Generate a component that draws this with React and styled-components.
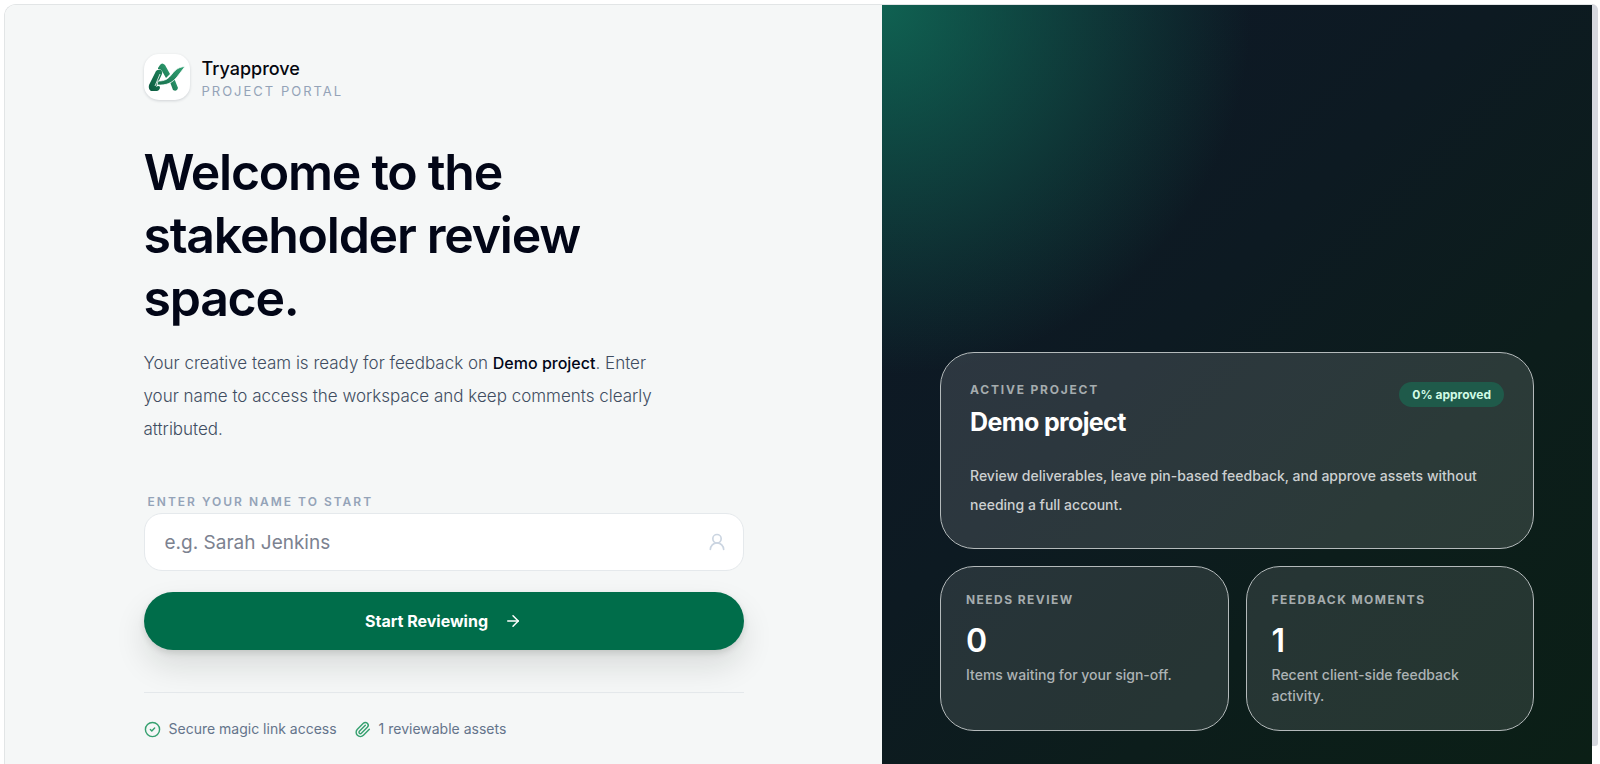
import React, { useState } from 'react';
import styled, { createGlobalStyle } from 'styled-components';
import { ArrowRight, CircleCheck, Paperclip, UserRound } from 'lucide-react';

const GlobalStyle = createGlobalStyle`
  * {
    box-sizing: border-box;
  }

  body {
    margin: 0;
    background: #fff;
    font-family: Inter, "Liberation Sans", sans-serif;
  }

  h1, h2, p {
    margin: 0;
  }
`;

const stats = [
    { label: 'Needs review', value: 0, text: 'Items waiting for your sign-off.' },
    { label: 'Feedback moments', value: 1, text: 'Recent client-side feedback activity.' }
];

const Logo = () => (
    <svg width="38" height="29" viewBox="0 0 38 29" aria-hidden="true">
        <defs>
            <linearGradient id="logoDark" x1="0" y1="1" x2="1" y2="0">
                <stop offset="0" stopColor="#0c5a40" />
                <stop offset="1" stopColor="#1d8259" />
            </linearGradient>
            <linearGradient id="logoLight" x1="0" y1="1" x2="1" y2="0">
                <stop offset="0" stopColor="#17714d" />
                <stop offset="1" stopColor="#33a375" />
            </linearGradient>
        </defs>
        <path d="M10 5L12 2Q14 -1 17 2L22 11L18 15L14 8Q13 6 10 6Z" fill="url(#logoLight)" />
        <path d="M22 19L26 15L30 25Q29 29 25 27Z" fill="url(#logoLight)" />
        <path d="M8 8Q10 6 13 7Q15 9 14 11L8 24Q11 22 12 24Q12 27 9 28L3 28Q0 26 1 22Z" fill="url(#logoDark)" />
        <path d="M10 18C17 18 20 16 24 11C28 6 31 4 37 3.5L29 14C24 20 19 22.5 9 22Z" fill="url(#logoLight)" stroke="#fff" strokeWidth="0.8" />
        <path d="M12 11L7 23" fill="none" stroke="#fff" strokeWidth="0.8" />
    </svg>
);

const App = () => {
    const [name, setName] = useState('');

    const handleSubmit = (e) => {
        e.preventDefault();
    };

    return (
        <Page>
            <GlobalStyle />
            <Frame>
                <Welcome>
                    <Content>
                        <Brand>
                            <LogoBox><Logo /></LogoBox>
                            <div>
                                <BrandName>Tryapprove</BrandName>
                                <BrandSub>Project portal</BrandSub>
                            </div>
                        </Brand>
                        <Title>Welcome to the stakeholder review space.</Title>
                        <Intro>
                            Your creative team is ready for feedback on <strong>Demo project</strong>. Enter
                            your name to access the workspace and keep comments clearly attributed.
                        </Intro>
                        <form onSubmit={handleSubmit}>
                            <FieldLabel htmlFor="name">Enter your name to start</FieldLabel>
                            <Field>
                                <input
                                    id="name"
                                    type="text"
                                    placeholder="e.g. Sarah Jenkins"
                                    value={name}
                                    onChange={(e) => setName(e.target.value)}
                                />
                                <UserRound size={20} strokeWidth={2} />
                            </Field>
                            <Submit type="submit">
                                Start Reviewing
                                <ArrowRight size={18} />
                            </Submit>
                        </form>
                        <Perks>
                            <Perk><CircleCheck size={17} />Secure magic link access</Perk>
                            <Perk><Paperclip size={17} />1 reviewable assets</Perk>
                        </Perks>
                    </Content>
                </Welcome>
                <Summary>
                    <ProjectCard>
                        <ProjectHead>
                            <div>
                                <CardLabel $tracking="0.15em">Active project</CardLabel>
                                <ProjectName>Demo project</ProjectName>
                            </div>
                            <Badge>0% approved</Badge>
                        </ProjectHead>
                        <ProjectText>
                            Review deliverables, leave pin-based feedback, and approve assets without needing a full account.
                        </ProjectText>
                    </ProjectCard>
                    <Stats>
                        {stats.map((stat) => (
                            <StatCard key={stat.label}>
                                <CardLabel $tracking="0.12em">{stat.label}</CardLabel>
                                <StatValue>{stat.value}</StatValue>
                                <StatText>{stat.text}</StatText>
                            </StatCard>
                        ))}
                    </Stats>
                </Summary>
            </Frame>
            <Scrollbar />
        </Page>
    );
};

const Page = styled.div`
  display: flex;
  min-height: 100vh;
  padding: 4px 2px 0 4px;
`;

const Frame = styled.main`
  flex: 1;
  display: grid;
  grid-template-columns: 105fr 85fr;
  border: 1px solid #e2e5e6;
  border-right: none;
  border-bottom: none;
  border-radius: 12px 0 0 0;
  overflow: hidden;
`;

const Scrollbar = styled.div`
  width: 6px;
  margin-bottom: 18px;
  background: #d5d7de;
  border-radius: 0 6px 3px 0;
`;

const Welcome = styled.section`
  display: flex;
  justify-content: center;
  padding: 49px 32px 16px;
  background: #f5f7f7;
`;

const Content = styled.div`
  width: 100%;
  max-width: 600px;
`;

const Brand = styled.div`
  display: flex;
  align-items: center;
  gap: 12px;
`;

const LogoBox = styled.div`
  display: flex;
  align-items: center;
  justify-content: center;
  width: 46px;
  height: 46px;
  border-radius: 15px;
  background: #fff;
  box-shadow: 0 1px 3px rgba(15, 23, 42, 0.16);
`;

const BrandName = styled.p`
  color: #05070f;
  font-size: 18px;
  font-weight: 500;
  line-height: 28px;
`;

const BrandSub = styled.p`
  color: #94a3b8;
  font-size: 13px;
  line-height: 16px;
  letter-spacing: 2px;
  text-transform: uppercase;
`;

const Title = styled.h1`
  max-width: 500px;
  margin-top: 41px;
  color: #020617;
  font-size: 50px;
  font-weight: 600;
  line-height: 63px;
  letter-spacing: -0.025em;
`;

const Intro = styled.p`
  max-width: 530px;
  margin: 17px 0 45px;
  color: #3f4d61;
  font-size: 17px;
  font-weight: 300;
  line-height: 33px;

  strong {
    color: #020617;
    font-size: 16px;
    font-weight: 500;
  }
`;

const FieldLabel = styled.label`
  display: block;
  padding-left: 4px;
  color: #94a3b8;
  font-size: 12px;
  font-weight: 600;
  line-height: 22px;
  letter-spacing: 2px;
  text-transform: uppercase;
`;

const Field = styled.div`
  display: flex;
  align-items: center;
  height: 58px;
  padding: 0 16px 0 20px;
  border: 1px solid #e5e9ec;
  border-radius: 18px;
  background: #fff;
  color: #cbd5e1;

  input {
    flex: 1;
    min-width: 0;
    padding: 0;
    border: none;
    outline: none;
    background: transparent;
    color: #020617;
    font-family: inherit;
    font-size: 19px;
  }

  input::placeholder {
    color: #7c8290;
  }
`;

const Submit = styled.button`
  display: flex;
  align-items: center;
  justify-content: center;
  gap: 16px;
  width: 100%;
  height: 58px;
  margin-top: 21px;
  border: none;
  border-radius: 29px;
  background: #006d4a;
  box-shadow: 0 16px 32px rgba(15, 23, 20, 0.12), 0 3px 6px rgba(15, 23, 20, 0.12);
  color: #fff;
  font-family: inherit;
  font-size: 16px;
  font-weight: 700;
  cursor: pointer;
`;

const Perks = styled.div`
  display: flex;
  flex-wrap: wrap;
  gap: 17px;
  margin-top: 42px;
  padding-top: 24px;
  border-top: 1px solid #e4e8eb;
`;

const Perk = styled.span`
  display: flex;
  align-items: center;
  gap: 8px;
  color: #64748b;
  font-size: 14px;
  line-height: 24px;

  svg {
    color: #35a06f;
  }
`;

const Summary = styled.aside`
  display: flex;
  flex-direction: column;
  justify-content: flex-end;
  gap: 17px;
  padding: 59px 58px 33px;
  background:
    radial-gradient(circle at top left, rgba(16, 116, 92, 0.8), transparent 370px),
    linear-gradient(135deg, #0e1828 0%, #0d1a22 42%, #0c1d1b 68%, #0b1f16 100%);
  color: #fff;
`;

const Card = styled.section`
  border: 1px solid #b4babb;
  border-radius: 34px;
`;

const ProjectCard = styled(Card)`
  padding: 28px 29px 29px;
  background: rgba(255, 255, 255, 0.13);
`;

const ProjectHead = styled.div`
  display: flex;
  align-items: flex-start;
  justify-content: space-between;
`;

const CardLabel = styled.p`
  color: #a5acae;
  font-size: 12px;
  font-weight: 700;
  line-height: 18px;
  letter-spacing: ${(props) => props.$tracking};
  text-transform: uppercase;
`;

const ProjectName = styled.h2`
  margin-top: 6px;
  font-size: 25px;
  font-weight: 700;
  line-height: 34px;
  letter-spacing: -0.025em;
`;

const Badge = styled.span`
  margin-top: 1px;
  padding: 0 13px;
  border-radius: 13px;
  background: #1f5a4a;
  color: #d1fae5;
  font-size: 12px;
  font-weight: 700;
  line-height: 25px;
`;

const ProjectText = styled.p`
  margin-top: 22px;
  color: #ccd0d1;
  font-size: 14px;
  font-weight: 500;
  line-height: 29px;
`;

const Stats = styled.div`
  display: grid;
  grid-template-columns: 1fr 1fr;
  gap: 17px;
`;

const StatCard = styled(Card)`
  padding: 24px 25px;
  background: rgba(255, 255, 255, 0.11);
`;

const StatValue = styled.p`
  margin-top: 12px;
  font-size: 32px;
  font-weight: 600;
  line-height: 40px;
`;

const StatText = styled.p`
  margin-top: 3px;
  color: #adb3b5;
  font-size: 14px;
  font-weight: 500;
  line-height: 21px;
`;

export default App;
